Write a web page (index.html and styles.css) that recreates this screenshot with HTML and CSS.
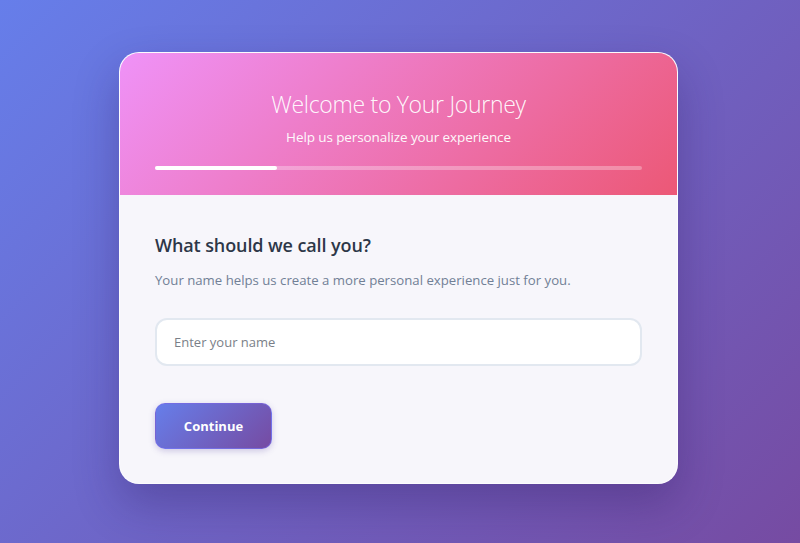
FILE: index.html
```html
<!DOCTYPE html>
<html lang="en">
<head>
<meta charset="utf-8">
<title>Welcome</title>
<link rel="stylesheet" href="styles.css">
</head>
<body>
<main class="stage">
  <section class="card">
    <header class="card-header">
      <h1 class="title">Welcome to Your Journey</h1>
      <p class="subtitle">Help us personalize your experience</p>
      <div class="progress"><div class="progress-fill" style="width:25%"></div></div>
    </header>
    <div class="card-body">
      <h2 class="question">What should we call you?</h2>
      <p class="hint">Your name helps us create a more personal experience just for you.</p>
      <input class="name-input" type="text" placeholder="Enter your name">
      <div class="actions">
        <button class="btn-continue" type="button">Continue</button>
      </div>
    </div>
  </section>
</main>
</body>
</html>
```

FILE: styles.css
```css
* { box-sizing: border-box; }
html, body { margin: 0; height: 100%; }
body {
  font-family: "Open Sans", "Noto Sans", sans-serif;
  background: linear-gradient(135deg, #667eea 0%, #764ba2 100%);
}
.stage {
  height: 543px;
  display: flex;
  justify-content: center;
  align-items: flex-start;
  padding-top: 52px;
}
.card {
  width: 559px;
  margin-left: -3px;
  border-radius: 20px;
  overflow: hidden;
  background: rgba(255,255,255,0.95);
  border: 1px solid rgba(255,255,255,0.6);
  box-shadow: 0 20px 45px rgba(40,20,90,0.3);
}
.card-header {
  background: linear-gradient(135deg, #ef92f8 0%, #ec5876 100%);
  padding: 36px 35px 25px;
  text-align: center;
  color: #fff;
}
.title {
  margin: 0;
  font-weight: 300;
  font-size: 23px;
  letter-spacing: -0.3px;
  line-height: 30px;
  color: rgba(255,255,255,0.96);
}
.subtitle {
  margin: 8px 0 0;
  font-size: 13.5px;
  font-weight: 500;
  letter-spacing: -0.1px;
  line-height: 20px;
  opacity: 0.95;
}
.progress {
  margin-top: 19px;
  height: 4px;
  border-radius: 2px;
  background: rgba(255,255,255,0.3);
}
.progress-fill {
  height: 100%;
  border-radius: 2px;
  background: #fff;
}
.card-body {
  background: #f7f6fb;
  padding: 37px 35px 34px;
}
.question {
  margin: 0;
  font-size: 18px;
  letter-spacing: -0.1px;
  line-height: 26px;
  font-weight: 600;
  color: #2d3748;
}
.hint {
  margin: 11px 0 0;
  font-size: 13.2px;
  line-height: 22px;
  color: #718096;
}
.name-input {
  display: block;
  margin-top: 27px;
  width: 100%;
  height: 48px;
  padding: 0 17px;
  border: 2px solid #e2e8f0;
  border-radius: 12px;
  background: #fff;
  font-family: inherit;
  font-size: 13px;
  color: #2d3748;
  outline: none;
}
.name-input::placeholder { color: #7a7f88; }
.actions { margin-top: 37px; }
.btn-continue {
  display: block;
  width: 117px;
  height: 46px;
  border: 1px solid rgba(120,110,240,0.6);
  border-radius: 10px;
  background: linear-gradient(135deg, #667eea 0%, #764ba2 100%);
  color: #fff;
  font-family: inherit;
  font-size: 13px;
  font-weight: 700;
  box-shadow: 0 2px 6px rgba(80,60,160,0.25);
}
```
